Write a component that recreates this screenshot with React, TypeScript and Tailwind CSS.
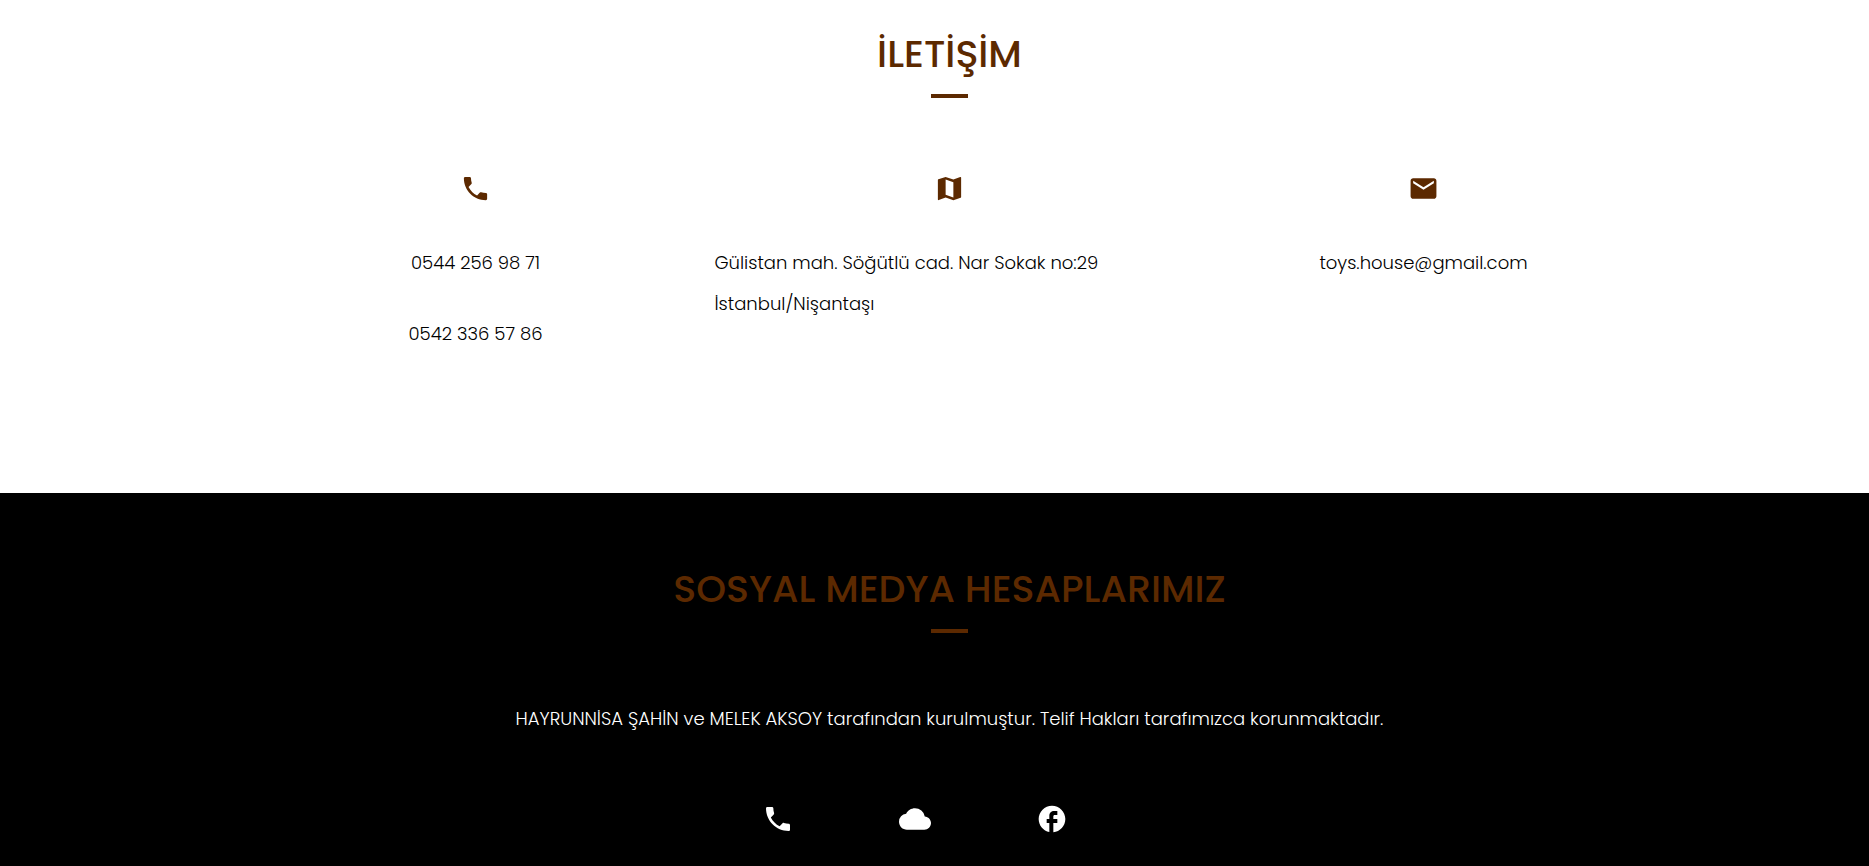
import { MdPhone, MdMap, MdEmail, MdCloud, MdFacebook } from "react-icons/md";

function Heading({ children }: { children: string }) {
  return (
    <div className="flex flex-col items-center">
      <h2 className="text-[38px] leading-[60px] font-medium text-[#5c2900]">{children}</h2>
      <span className="mt-[10px] h-1 w-[37px] bg-[#5c2900]" />
    </div>
  );
}

export default function App() {
  return (
    <div className="flex min-h-screen flex-col font-['Poppins','Open_Sans',sans-serif] text-[18px] leading-[41px] font-light text-black">
      <section className="flex flex-col items-center bg-white pt-6 pb-[139px] pl-[30px]">
        <Heading>İLETİŞİM</Heading>
        <div className="mt-[75px] grid w-full max-w-[1422px] grid-cols-3">
          <div className="flex flex-col items-center">
            <MdPhone className="size-[31px] text-[#5c2900]" />
            <a href="tel:05442569871" className="mt-[38px]">0544 256 98 71</a>
            <a href="tel:05423365786" className="mt-[30px]">0542 336 57 86</a>
          </div>
          <div className="flex flex-col items-center">
            <MdMap className="size-[31px] text-[#5c2900]" />
            <address className="mt-[38px] w-[470px] not-italic">
              Gülistan mah. Söğütlü cad. Nar Sokak no:29
              <br />
              İstanbul/Nişantaşı
            </address>
          </div>
          <div className="flex flex-col items-center">
            <MdEmail className="size-[31px] text-[#5c2900]" />
            <a href="mailto:toys.house@gmail.com" className="mt-[38px]">toys.house@gmail.com</a>
          </div>
        </div>
      </section>
      <footer className="flex grow flex-col items-center bg-black pt-[66px] pb-[30px] pl-[30px]">
        <Heading>SOSYAL MEDYA HESAPLARIMIZ</Heading>
        <p className="mt-[65px] text-white">
          HAYRUNNİSA ŞAHİN ve MELEK AKSOY tarafından kurulmuştur. Telif Hakları tarafımızca korunmaktadır.
        </p>
        <div className="mt-16 mr-[70px] flex gap-[105px] text-white">
          <a href="#telefon" aria-label="Telefon"><MdPhone className="size-8" /></a>
          <a href="#bulut" aria-label="Bulut"><MdCloud className="size-8" /></a>
          <a href="#facebook" aria-label="Facebook"><MdFacebook className="size-8" /></a>
        </div>
      </footer>
    </div>
  );
}
